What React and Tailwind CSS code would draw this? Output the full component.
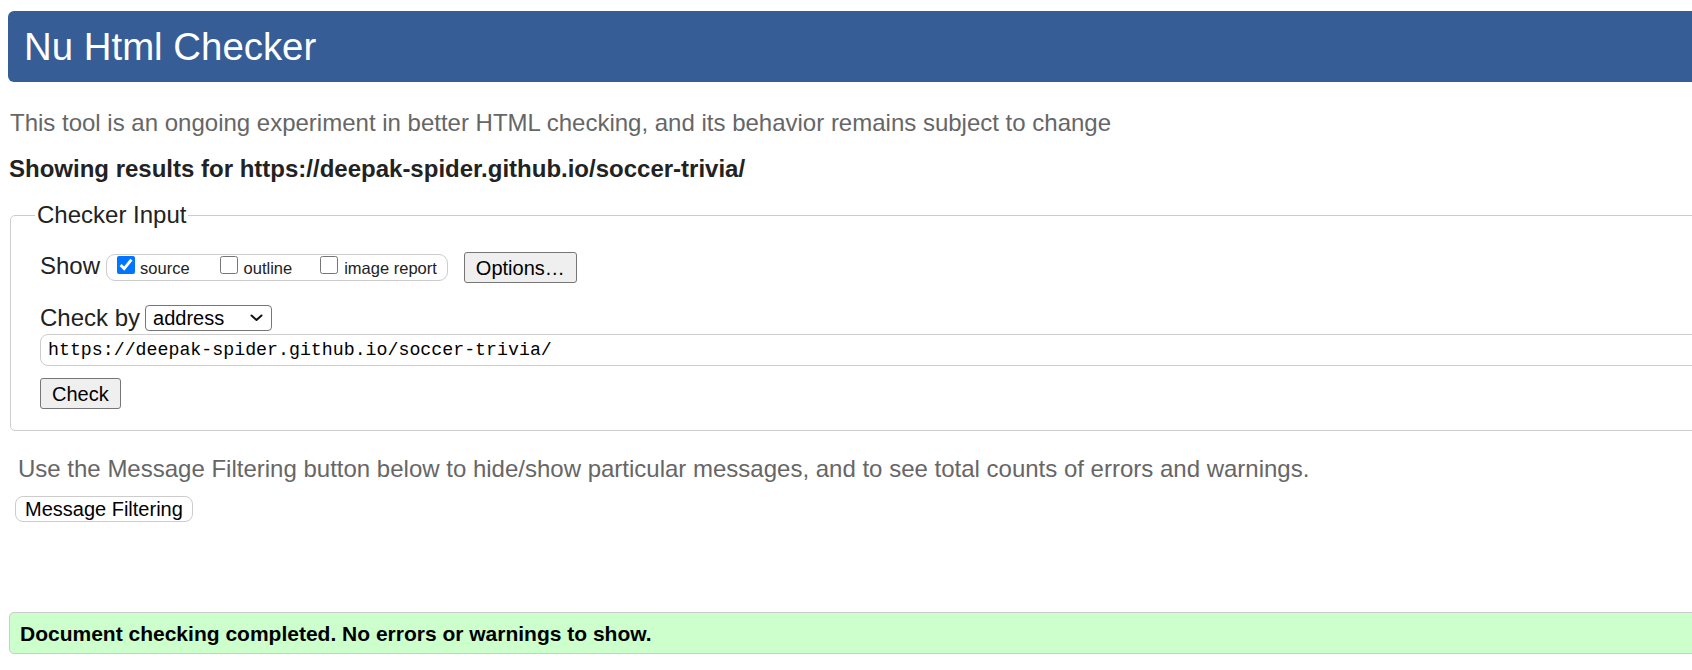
import React from "react";

function Check({ checked }) {
  return (
    <input
      type="checkbox"
      defaultChecked={checked}
      className="w-[18px] h-[18px] m-0 mb-[6px] shrink-0 accent-[#0075ff]"
    />
  );
}

export default function App() {
  return (
    <div className="w-[1692px] h-[670px] overflow-hidden bg-white font-['Liberation_Sans',Arial,sans-serif]">
      <div className="w-[1800px] px-2 pt-[11px]">
        <h1 className="h-[71px] rounded-[6px] bg-[#365d95] text-white text-[38.4px] leading-[44px] font-normal flex items-center pl-[16px]">
          Nu Html Checker
        </h1>
        <p className="mt-[27px] pl-[2px] text-[24px] leading-[28px] text-[#666]">
          This tool is an ongoing experiment in better HTML checking, and its behavior remains subject to change
        </p>
        <p className="mt-[18px] pl-[1px] text-[24px] leading-[28px] font-bold text-[#222]">
          Showing results for https://deepak-spider.github.io/soccer-trivia/
        </p>

        <fieldset className="mt-[18px] ml-[2px] border border-[#ccc] rounded-[5px] pl-[29px] pr-[60px] pb-[21px]">
          <legend className="ml-[-5px] px-[2px] text-[24px] leading-[28px] text-[#222]">Checker Input</legend>

          <div className="mt-[23px] h-[31px] flex items-center">
            <span className="text-[24px] leading-[28px] text-[#222] mb-[3px]">Show</span>
            <div className="ml-[6px] h-[27px] shrink-0 whitespace-nowrap border border-[#ccc] rounded-[9px] flex items-center px-[10px] text-[16.5px] leading-[20px] text-[#222]">
              <Check checked />
              <span className="ml-[5px]">source</span>
              <span className="ml-[30px] flex items-center">
                <Check />
                <span className="ml-[6px]">outline</span>
              </span>
              <span className="ml-[28px] flex items-center">
                <Check />
                <span className="ml-[6px]">image report</span>
              </span>
            </div>
            <button className="ml-[16px] h-[31px] px-[11px] shrink-0 whitespace-nowrap border border-[#767676] bg-[#efefef] rounded-[3px] text-[20px] leading-[24px] text-black">
              Options…
            </button>
          </div>

          <div className="mt-[21px] h-[28px] flex items-center">
            <span className="text-[24px] leading-[28px] text-[#222]">Check by</span>
            <div className="ml-[5px] w-[127px] h-[26px] border border-[#767676] rounded-[4px] bg-white flex items-center justify-between pl-[7px] pr-[8px] text-[20px] leading-[24px] text-black">
              <span>address</span>
              <svg width="13" height="8" viewBox="0 0 13 8" fill="none">
                <path d="M1.5 1.5 L6.5 6 L11.5 1.5" stroke="#111" strokeWidth="2" strokeLinecap="round" strokeLinejoin="round" />
              </svg>
            </div>
          </div>

          <input
            readOnly
            defaultValue="https://deepak-spider.github.io/soccer-trivia/"
            className="mt-[2px] block w-full h-[32px] border border-[#ccc] rounded-[8px] pl-[7px] font-['Liberation_Mono',monospace] text-[18.25px] text-black bg-white outline-none"
          />

          <button className="mt-[12px] block h-[31px] px-[11px] border border-[#767676] bg-[#efefef] rounded-[3px] text-[20px] leading-[24px] text-black">
            Check
          </button>
        </fieldset>

        <p className="mt-[24px] pl-[10px] text-[24px] leading-[28px] text-[#666]">
          Use the Message Filtering button below to hide/show particular messages, and to see total counts of errors and warnings.
        </p>
        <div className="mt-[13px]">
          <button className="ml-[7px] h-[26px] px-[9px] whitespace-nowrap border border-[#ccc] rounded-[8px] bg-white text-[20px] leading-[24px] text-black">
            Message Filtering
          </button>
        </div>

        <div className="mt-[89px] ml-[1px] h-[42px] bg-[#ccffcc] border border-[#ccc] rounded-[5px] flex items-center pl-[10px] font-bold text-[21px] leading-[25px] text-black">
          Document checking completed. No errors or warnings to show.
        </div>
      </div>
    </div>
  );
}
